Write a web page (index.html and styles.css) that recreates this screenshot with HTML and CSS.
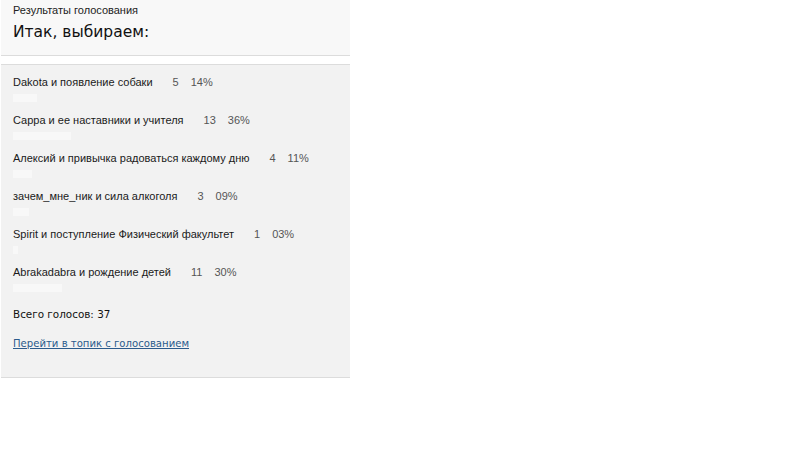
FILE: index.html
```html
<!DOCTYPE html>
<html lang="ru">
<head>
<meta charset="utf-8">
<title>Результаты голосования</title>
<link rel="stylesheet" href="styles.css">
</head>
<body>
<div class="panel">
  <div class="head">
    <div class="caption">Результаты голосования</div>
    <div class="title">Итак, выбираем:</div>
  </div>
  <div class="results">
    <div class="row">
      <div class="line"><span class="name">Dakota и появление собаки</span><span class="count">5</span><span class="pct">14%</span></div>
      <div class="bar" style="width:24px"></div>
    </div>
    <div class="row">
      <div class="line"><span class="name">Сарра и ее наставники и учителя</span><span class="count">13</span><span class="pct">36%</span></div>
      <div class="bar" style="width:58px"></div>
    </div>
    <div class="row">
      <div class="line"><span class="name">Алексий и привычка радоваться каждому дню</span><span class="count">4</span><span class="pct">11%</span></div>
      <div class="bar" style="width:19px"></div>
    </div>
    <div class="row">
      <div class="line"><span class="name">зачем_мне_ник и сила алкоголя</span><span class="count">3</span><span class="pct">09%</span></div>
      <div class="bar" style="width:16px"></div>
    </div>
    <div class="row">
      <div class="line"><span class="name">Spirit и поступление Физический факультет</span><span class="count">1</span><span class="pct">03%</span></div>
      <div class="bar" style="width:5px"></div>
    </div>
    <div class="row">
      <div class="line"><span class="name">Abrakadabra и рождение детей</span><span class="count">11</span><span class="pct">30%</span></div>
      <div class="bar" style="width:49px"></div>
    </div>
    <div class="total">Всего голосов: 37</div>
    <a class="topic" href="#">Перейти в топик с голосованием</a>
  </div>
</div>
</body>
</html>
```

FILE: styles.css
```css
html, body {
  margin: 0;
  padding: 0;
  background: #ffffff;
}

body {
  font-family: "DejaVu Sans", Verdana, sans-serif;
  color: #1a1a1a;
}

.panel {
  width: 349px;
  margin-left: 1px;
}

.head {
  background: #f8f8f8;
  border-bottom: 1px solid #dcdcdc;
  padding: 4px 12px 0 12px;
  height: 51px;
}

.caption {
  font-family: "Liberation Sans", Arial, sans-serif;
  font-size: 11px;
  line-height: 13px;
  color: #222;
}

.title {
  font-size: 15.5px;
  line-height: 20px;
  margin-top: 5px;
  color: #111;
}

.results {
  margin-top: 8px;
  background: #f2f2f2;
  border-top: 1px solid #dcdcdc;
  border-bottom: 1px solid #dcdcdc;
  padding: 11px 12px 0 12px;
  height: 301px;
  box-sizing: content-box;
}

.row {
  margin-bottom: 12px;
}

.line {
  display: flex;
  font-family: "Liberation Sans", Arial, sans-serif;
  font-size: 11px;
  line-height: 13px;
  white-space: nowrap;
}

.name {
  color: #1a1a1a;
}

.count {
  margin-left: 20px;
  color: #555;
}

.pct {
  margin-left: 12px;
  color: #555;
}

.bar {
  height: 8px;
  margin-top: 5px;
  background: #f8f8f8;
}

.total {
  font-size: 10.4px;
  line-height: 14px;
  margin-top: 15px;
  color: #111;
}

.topic {
  display: inline-block;
  margin-top: 16px;
  font-size: 10.1px;
  line-height: 14px;
  color: #2b5b8c;
  text-decoration: underline;
}
```
